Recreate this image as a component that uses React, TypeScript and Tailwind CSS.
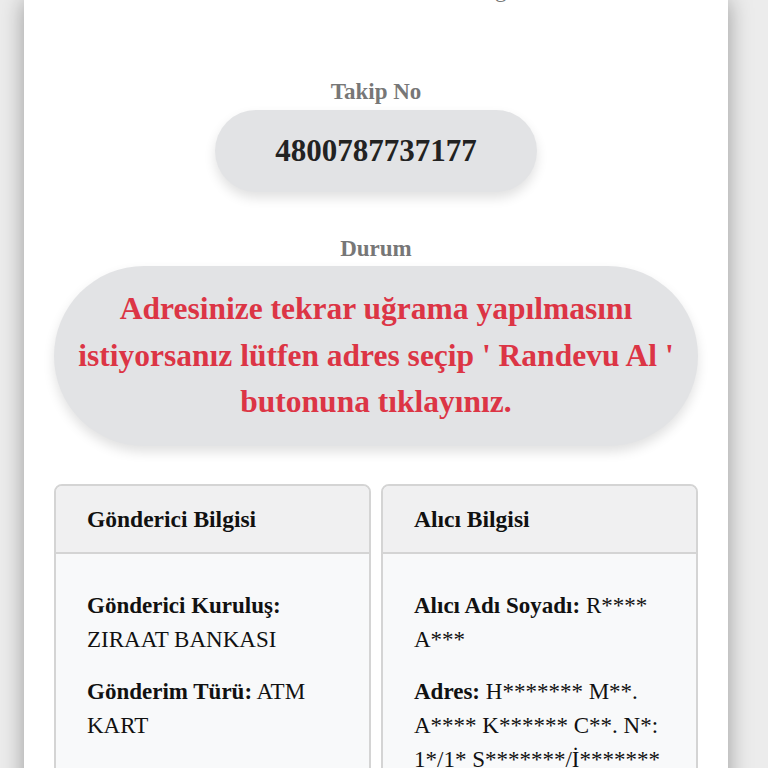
export default function App() {
  const serif = { fontFamily: '"Liberation Serif", "Times New Roman", serif' };

  return (
    <div className="min-h-[768px] bg-[#ececec]" style={serif}>
      <div className="ml-[24px] mr-[40px] min-h-[768px] overflow-hidden bg-white px-[30px] shadow-[0_0_22px_rgba(0,0,0,0.35)]">
        <div className="-mt-[27px] pl-[441px] text-[23px] leading-[34px] text-[#777]">g</div>

        <div className="mt-[68px] flex flex-col items-center">
          <div className="text-[23px] font-bold leading-[34px] text-[#777]">Takip No</div>
          <div className="mt-[1px] rounded-full bg-[#e2e3e5] px-[60px] py-[18px] text-[31px] font-bold leading-[46px] text-[#222] shadow-[0_6px_12px_rgba(0,0,0,0.12)]">
            4800787737177
          </div>

          <div className="mt-[40px] text-[23px] font-bold leading-[34px] text-[#777]">Durum</div>
          <div className="w-full rounded-[90px] bg-[#e2e3e5] px-[16px] py-[20px] text-center text-[31.5px] font-bold leading-[46.5px] text-[#dc3545] shadow-[0_6px_12px_rgba(0,0,0,0.12)]">
            Adresinize tekrar uğrama yapılmasını istiyorsanız lütfen adres seçip ' Randevu Al ' butonuna tıklayınız.
          </div>
        </div>

        <div className="mt-[38px] grid grid-cols-2 gap-[10px]">
          <div className="overflow-hidden rounded-[8px] border-2 border-[#d4d4d4] bg-[#f8f9fa]">
            <div className="border-b-2 border-[#d4d4d4] bg-[#f0f0f1] px-[31px] py-[16px] text-[23.5px] font-bold leading-[34px] text-[#111]">
              Gönderici Bilgisi
            </div>
            <div className="pl-[31px] pr-[24px] pt-[35px] pb-[40px] text-[23px] leading-[34px] text-[#111]">
              <p>
                <b>Gönderici Kuruluş:</b> ZIRAAT BANKASI
              </p>
              <p className="mt-[18px]">
                <b>Gönderim Türü:</b> ATM KART
              </p>
            </div>
          </div>

          <div className="overflow-hidden rounded-[8px] border-2 border-[#d4d4d4] bg-[#f8f9fa]">
            <div className="border-b-2 border-[#d4d4d4] bg-[#f0f0f1] px-[31px] py-[16px] text-[23.5px] font-bold leading-[34px] text-[#111]">
              Alıcı Bilgisi
            </div>
            <div className="pl-[31px] pr-[24px] pt-[35px] pb-[40px] text-[23px] leading-[34px] text-[#111]">
              <p>
                <b>Alıcı Adı Soyadı:</b> R**** A***
              </p>
              <p className="mt-[18px]">
                <b>Adres:</b> H******* M**. A**** K****** C**. N*: 1*/1* S*******/İ*******
              </p>
            </div>
          </div>
        </div>
      </div>
    </div>
  );
}
